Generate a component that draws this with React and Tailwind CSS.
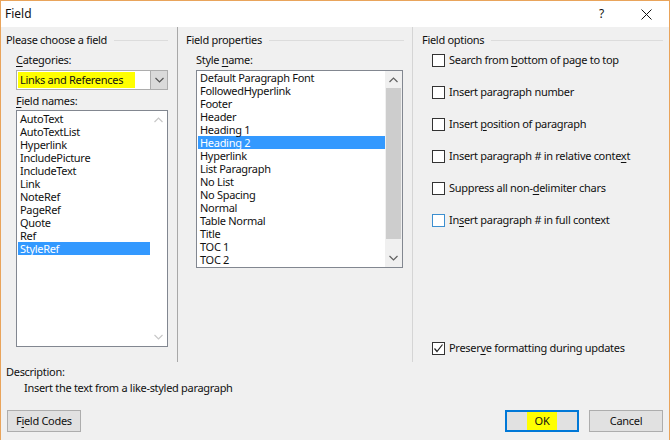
import React from "react";

const fieldNames = ["AutoText", "AutoTextList", "Hyperlink", "IncludePicture", "IncludeText", "Link", "NoteRef", "PageRef", "Quote", "Ref", "StyleRef"];
const styleNames = ["Default Paragraph Font", "FollowedHyperlink", "Footer", "Header", "Heading 1", "Heading 2", "Hyperlink", "List Paragraph", "No List", "No Spacing", "Normal", "Table Normal", "Title", "TOC 1", "TOC 2"];

const U = ({ children }) => <span className="underline underline-offset-2">{children}</span>;

const options = [
  <>Search from <U>b</U>ottom of page to top</>,
  <>Insert paragraph number</>,
  <>Insert <U>p</U>osition of paragraph</>,
  <>Insert paragraph # in relative conte<U>x</U>t</>,
  <>Suppress all non-<U>d</U>elimiter chars</>,
  <>In<U>s</U>ert paragraph # in full context</>,
];

function Chevron({ up, color }) {
  return (
    <svg width="9" height="6" viewBox="0 0 9 6">
      <polyline
        points={up ? "0.5,5 4.5,1 8.5,5" : "0.5,1 4.5,5 8.5,1"}
        fill="none"
        stroke={color}
        strokeWidth="1.2"
      />
    </svg>
  );
}

function GroupHeader({ label, right }) {
  return (
    <div className="flex items-center h-[14px]">
      <span className="whitespace-nowrap">{label}</span>
      <div className="flex-1 h-px bg-[#dcdcdc] ml-[7px]" style={{ marginRight: right }} />
    </div>
  );
}

function Checkbox({ checked, focus }) {
  return (
    <div
      className={`w-[13px] h-[13px] shrink-0 bg-white border flex items-center justify-center ${
        focus ? "border-[#3c8fd0]" : "border-[#333333]"
      }`}
    >
      {checked && (
        <svg width="11" height="11" viewBox="0 0 11 11">
          <polyline points="1.5,5.5 4,8.5 9.5,1.5" fill="none" stroke="#222" strokeWidth="1.2" />
        </svg>
      )}
    </div>
  );
}

export default function App() {
  return (
    <div className="w-[672px] h-[440px] bg-white font-['Noto_Sans',sans-serif] text-[11px] tracking-[-0.3px] text-[#111] leading-[14px]">
      <div className="w-[670px] h-[440px] border-l border-t border-r border-[#e9a45b] bg-[#f0f0f0] flex flex-col">
        {/* title bar */}
        <div className="h-[26px] bg-white flex items-center shrink-0">
          <span className="ml-[4px] text-[12px] tracking-normal">Field</span>
          <span className="ml-auto mr-[37px] text-[12px]">?</span>
          <svg width="11" height="11" viewBox="0 0 11 11" className="mr-[17px]">
            <line x1="0.5" y1="0.5" x2="10.5" y2="10.5" stroke="#111" strokeWidth="1" />
            <line x1="10.5" y1="0.5" x2="0.5" y2="10.5" stroke="#111" strokeWidth="1" />
          </svg>
        </div>

        {/* columns */}
        <div className="h-[335px] flex shrink-0">
          {/* left */}
          <div className="w-[177px] border-r border-[#a8a8a8] pl-[5px] pt-[6px] flex flex-col">
            <GroupHeader label="Please choose a field" right="9px" />
            <div className="ml-[10px] mt-[6px]">
              <U>C</U>ategories:
            </div>
            <div className="ml-[10px] mt-[3px] w-[152px] h-[20px] border border-[#adadad] bg-white flex">
              <div className="flex-1 p-[1px]">
                <div className="w-[117px] h-full bg-[#ffff00] flex items-center pl-[2px] whitespace-nowrap">Links and References</div>
              </div>
              <div className="w-[17px] h-full bg-[#dadada] border-l border-[#adadad] flex items-center justify-center">
                <Chevron color="#555" />
              </div>
            </div>
            <div className="ml-[10px] mt-[4px]">
              <U>F</U>ield names:
            </div>
            <div className="ml-[10px] mt-[2px] w-[152px] h-[237px] border border-[#828790] bg-white flex">
              <div className="flex-1 pt-[1px] pl-[1px]">
                {fieldNames.map((n) => (
                  <div
                    key={n}
                    className={`h-[13px] leading-[13px] pl-[2px] ${n === "StyleRef" ? "bg-[#3399ff] text-white" : ""}`}
                  >
                    {n}
                  </div>
                ))}
              </div>
              <div className="w-[17px] flex flex-col items-center justify-between py-[6px]">
                <Chevron up color="#c8c8c8" />
                <Chevron color="#c8c8c8" />
              </div>
            </div>
          </div>

          {/* middle */}
          <div className="w-[235px] border-r border-[#d5d5d5] pl-[8px] pt-[6px] flex flex-col">
            <GroupHeader label="Field properties" right="8px" />
            <div className="ml-[10px] mt-[6px]">
              Style <U>n</U>ame:
            </div>
            <div className="ml-[10px] mt-[3px] w-[207px] h-[198px] border border-[#828790] bg-white flex">
              <div className="flex-1 pl-[1px]">
                {styleNames.map((n) => (
                  <div
                    key={n}
                    className={`h-[13px] leading-[13px] pl-[2px] ${n === "Heading 2" ? "bg-[#3399ff] text-white" : ""}`}
                  >
                    {n}
                  </div>
                ))}
              </div>
              <div className="w-[17px] bg-[#f0f0f0] flex flex-col items-center">
                <div className="h-[17px] flex items-center justify-center">
                  <Chevron up color="#606060" />
                </div>
                <div className="w-[15px] h-[151px] bg-[#cdcdcd]" />
                <div className="flex-1 flex items-end justify-center pb-[6px]">
                  <Chevron color="#606060" />
                </div>
              </div>
            </div>
          </div>

          {/* right */}
          <div className="flex-1 pl-[9px] pt-[6px] flex flex-col">
            <GroupHeader label="Field options" right="6px" />
            <div className="ml-[10px] mt-[6px] flex flex-col gap-[18px]">
              {options.map((o, i) => (
                <div key={i} className="h-[14px] flex items-center gap-[4px]">
                  <Checkbox focus={i === 5} />
                  <span className="whitespace-nowrap">{o}</span>
                </div>
              ))}
            </div>
            <div className="ml-[10px] mt-auto mb-[7px] h-[14px] flex items-center gap-[4px]">
              <Checkbox checked />
              <span>
                Preser<U>v</U>e formatting during updates
              </span>
            </div>
          </div>
        </div>

        {/* description */}
        <div className="pl-[5px] mt-[3px]">Description:</div>
        <div className="pl-[23px] mt-[2px]">Insert the text from a like-styled paragraph</div>

        {/* buttons */}
        <div className="mt-[15px] flex items-center">
          <button className="ml-[6px] w-[74px] h-[22px] bg-[#e1e1e1] border border-[#adadad] text-left pl-[8px]">
            F<U>i</U>eld Codes
          </button>
          <button className="ml-auto w-[74px] h-[22px] bg-[#e1e1e1] border-2 border-[#0078d7] flex items-center justify-center">
            <span className="bg-[#ffff00] px-[8px] h-[18px] flex items-center">OK</span>
          </button>
          <button className="ml-[10px] mr-[6px] w-[74px] h-[22px] bg-[#e1e1e1] border border-[#adadad]">Cancel</button>
        </div>
      </div>
    </div>
  );
}
